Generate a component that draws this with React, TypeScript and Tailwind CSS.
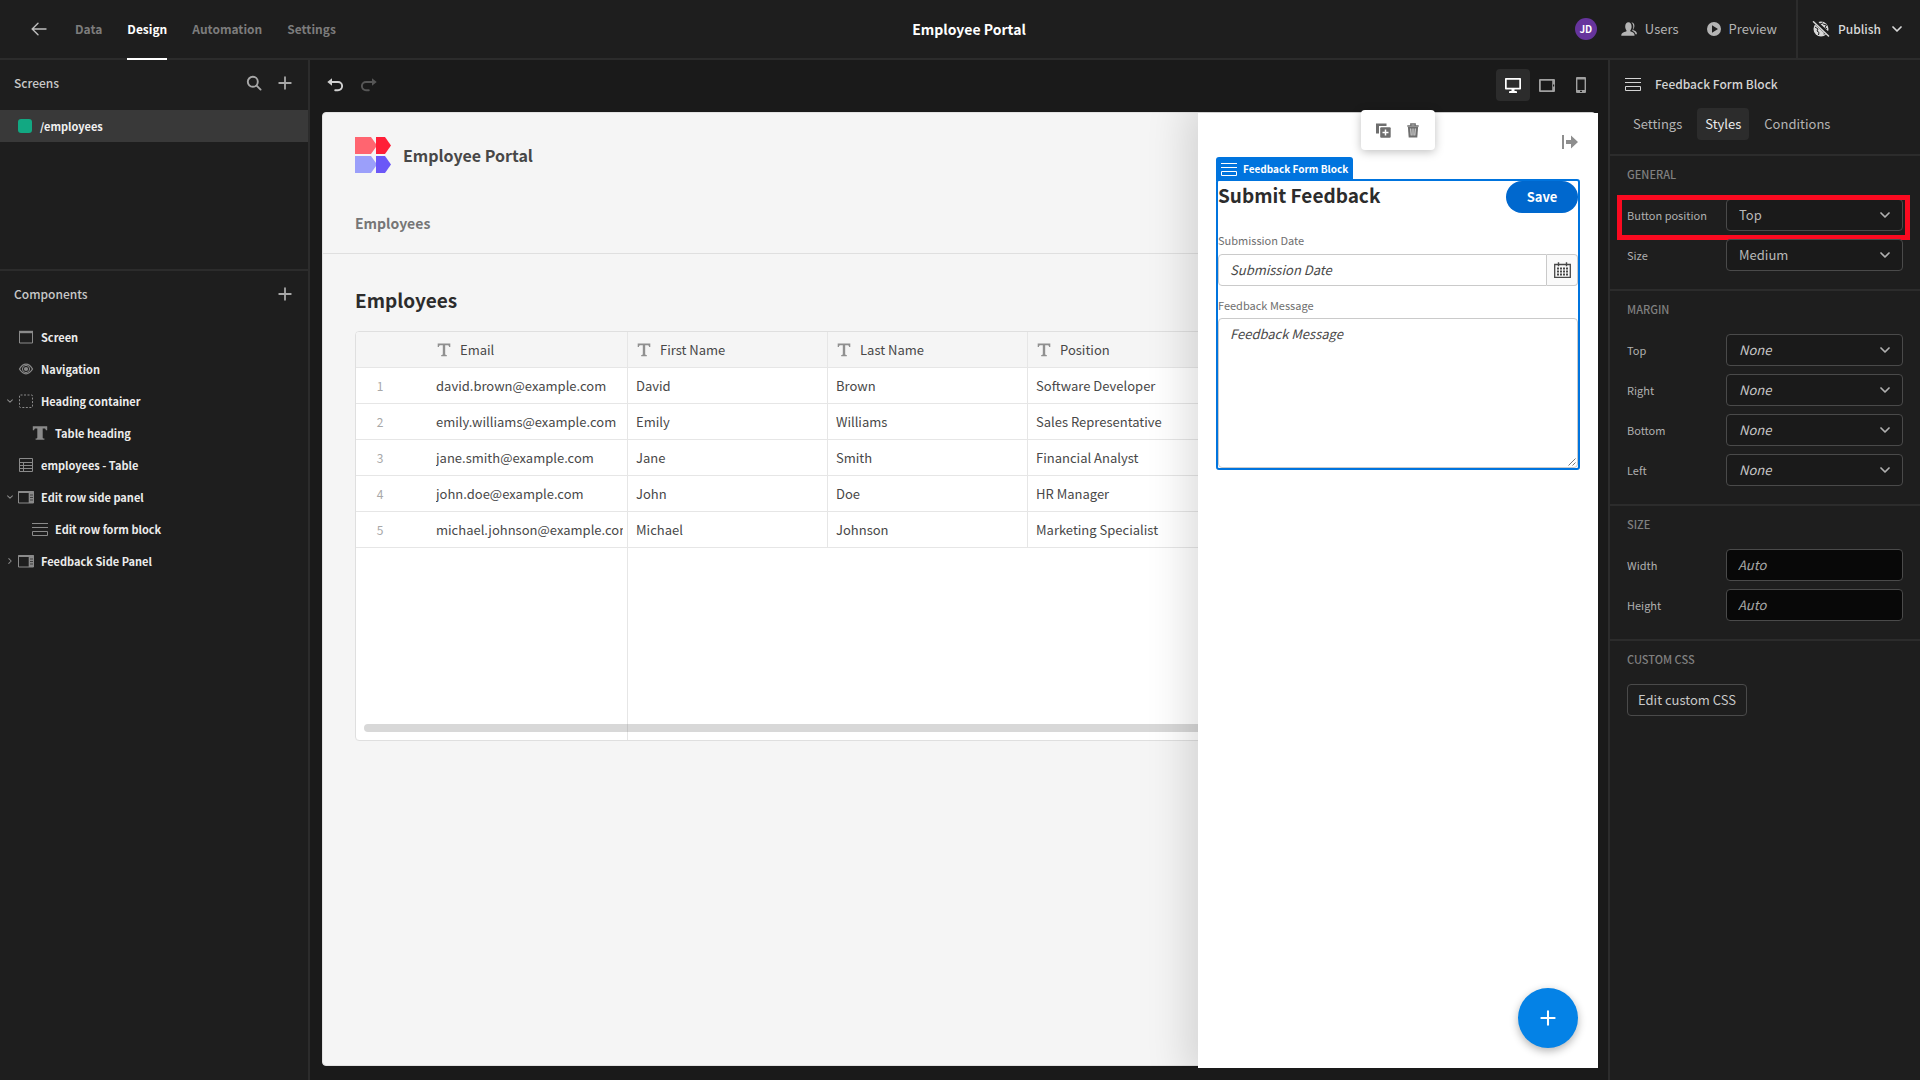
import type { ReactNode } from 'react';

interface IconProps {
  className?: string;
}

const FONT = "font-['Noto_Sans_CJK_SC','Liberation_Sans',sans-serif]";

function ArrowLeftIcon() {
  return (
    <svg viewBox="0 0 16 14" className="h-[14px] w-4" fill="none" stroke="currentColor" strokeWidth="1.4" strokeLinecap="round">
      <path d="M15 7H1.5M7 1.2 1.2 7 7 12.8" />
    </svg>
  );
}

function SearchIcon() {
  return (
    <svg viewBox="0 0 16 16" className="size-4" fill="none" stroke="currentColor" strokeWidth="1.9" strokeLinecap="round">
      <circle cx="6.8" cy="6.8" r="5" />
      <path d="m10.6 10.6 4 4" />
    </svg>
  );
}

function PlusIcon({ className }: IconProps) {
  return (
    <svg viewBox="0 0 14 14" className={className} fill="none" stroke="currentColor" strokeWidth="1.8" strokeLinecap="round">
      <path d="M7 1.2v11.6M1.2 7h11.6" />
    </svg>
  );
}

function ChevronDownIcon({ className }: IconProps) {
  return (
    <svg viewBox="0 0 10 6" className={className} fill="none" stroke="currentColor" strokeWidth="1.7" strokeLinecap="round" strokeLinejoin="round">
      <path d="m1 1 4 4 4-4" />
    </svg>
  );
}

function ChevronRightIcon({ className }: IconProps) {
  return (
    <svg viewBox="0 0 6 10" className={className} fill="none" stroke="currentColor" strokeWidth="1.7" strokeLinecap="round" strokeLinejoin="round">
      <path d="m1 1 4 4-4 4" />
    </svg>
  );
}

function UndoIcon({ className }: IconProps) {
  return (
    <svg viewBox="0 0 16 14" className={className}>
      <path d="M4 4h7a3.9 3.9 0 0 1 0 8.2H8.2" fill="none" stroke="currentColor" strokeWidth="1.9" strokeLinecap="round" />
      <path d="M5 .2v7.6L.3 4z" fill="currentColor" />
    </svg>
  );
}

function UsersIcon() {
  return (
    <svg viewBox="0 0 16 14" className="h-[14px] w-4" fill="currentColor">
      <path d="M9.7 9.4c-.5-.2-.5-.8-.3-1.2.8-.9 1.2-2.1 1.2-3.7C10.6 1.900 9.400.3 7.400.3S4.200 1.900 4.200 4.500c0 1.600.5 2.800 1.200 3.700.2.400.2 1-.3 1.200C2.600 10.100.3 11 .3 12.800v1h13.200v-1c0-1.800-1.600-2.700-3.800-3.400z" />
      <path d="M10.400.4c1.900-.2 3 1.200 3 3.400 0 1.500-.5 2.600-1.100 3.400-.3.400-.2.900.2 1.100 1.900.7 3.400 1.600 3.400 3.400v.6h-1.400c-.2-1.700-1.400-2.800-3.300-3.600.7-1 1.100-2.300 1.100-4.100 0-1.800-.6-3.300-1.900-4.200z" />
    </svg>
  );
}

function PlayIcon() {
  return (
    <svg viewBox="0 0 14 14" className="size-[14px]" fill="currentColor">
      <path fillRule="evenodd" d="M7 0a7 7 0 1 0 0 14A7 7 0 0 0 7 0zM5 3.300 11 7l-6 3.700z" />
    </svg>
  );
}

function GlobeStrikeIcon() {
  return (
    <svg viewBox="0 0 18 16" className="h-4 w-[18px]">
      <circle cx="9" cy="8" r="7.500" fill="currentColor" />
      <path d="M6.500 1.500 5 3.500l2 1.500 1-2 3-1.200M11 3l3.500 1-1.500 2.500 2 1.500M3 6l3 2-1 2 2 1.500-.5 2.500M10 9l3 1-1 3.500" fill="none" stroke="#1e1e1e" strokeWidth="1" />
      <path d="M2.500.2 17 13.800" stroke="#1e1e1e" strokeWidth="4" />
      <path d="M1.500.8 16.500 15" stroke="currentColor" strokeWidth="1.500" strokeLinecap="round" />
    </svg>
  );
}

function DesktopIcon() {
  return (
    <svg viewBox="0 0 16 15" className="h-[15px] w-4" fill="currentColor">
      <path fillRule="evenodd" d="M.8 0h14.400a.8.8 0 0 1 .8.8v9.900a.8.8 0 0 1-.8.8H9.500V13H11a1 1 0 0 1 1 1v1H4v-1a1 1 0 0 1 1-1h1.500v-1.500H.8a.8.8 0 0 1-.8-.8V.8A.8.8 0 0 1 .8 0zm.9 1.700v8.100h12.600V1.700z" />
    </svg>
  );
}

function TabletIcon() {
  return (
    <svg viewBox="0 0 16 13" className="h-[13px] w-4" fill="currentColor">
      <path fillRule="evenodd" d="M1 0h14a1 1 0 0 1 1 1v11a1 1 0 0 1-1 1H1a1 1 0 0 1-1-1V1a1 1 0 0 1 1-1zm.8 1.800v9.400h11.400V1.800zm12.200 3.700v2h1.200v-2z" />
    </svg>
  );
}

function PhoneIcon() {
  return (
    <svg viewBox="0 0 10 16" className="h-4 w-[10px]" fill="currentColor">
      <path fillRule="evenodd" d="M1 0h8a1 1 0 0 1 1 1v14a1 1 0 0 1-1 1H1a1 1 0 0 1-1-1V1a1 1 0 0 1 1-1zm.4 2.500v10.500h7.200V2.500zm2.600 11.300v1.200h2v-1.200z" />
    </svg>
  );
}

function ScreenIcon() {
  return (
    <svg viewBox="0 0 16 14" className="h-[14px] w-4">
      <path d="M1.500 2.500h13v10.500h-13z" fill="none" stroke="currentColor" />
      <path d="M1 .8h14v2.400H1z" fill="currentColor" />
    </svg>
  );
}

function EyeIcon() {
  return (
    <svg viewBox="0 0 16 12" className="h-3 w-4">
      <path d="M1.500 6C3.500 2.500 5.600 1.200 8 1.200S12.500 2.500 14.500 6c-2 3.500-4.100 4.800-6.500 4.800S3.500 9.500 1.500 6z" fill="none" stroke="currentColor" strokeWidth="1.300" />
      <circle cx="8" cy="6" r="3.600" fill="none" stroke="currentColor" />
      <circle cx="8" cy="6" r="2.100" fill="currentColor" />
    </svg>
  );
}

function ContainerIcon() {
  return (
    <svg viewBox="0 0 16 16" className="size-4" fill="none" stroke="currentColor">
      <rect x="1.500" y="2" width="13" height="12.500" rx="1" strokeDasharray="2 1.500" />
    </svg>
  );
}

function BoldTextIcon() {
  return (
    <svg viewBox="0 0 16 14" className="h-[14px] w-4" fill="currentColor">
      <path d="M.8.3h14.400V4.300h-1.300c-.2-1.300-.8-1.700-1.800-1.700H10.700v8.900c0 .7.400 1 1.700 1v1.200H3.600v-1.200c1.300 0 1.700-.3 1.700-1V2.600H3.900c-1 0-1.600.4-1.800 1.700H.8z" />
    </svg>
  );
}

function TextIcon() {
  return (
    <svg viewBox="0 0 14 14" className="size-[14px] shrink-0" fill="currentColor">
      <path d="M.7.5h12.600v3.500h-1.200c-.1-1.200-.6-1.700-1.600-1.700H8.200v8.700c0 .8.400 1.100 1.600 1.100v1.200H4.200v-1.200c1.200 0 1.600-.3 1.600-1.100V2.300H3.500c-1 0-1.500.5-1.600 1.700H.7z" />
    </svg>
  );
}

function TableIcon() {
  return (
    <svg viewBox="0 0 16 16" className="size-4" fill="none" stroke="currentColor">
      <path d="M1.500 1.500h13v13h-13zM1.500 5.500h13M1.500 8.500h13M1.500 11.500h13M5.500 5.500v9" />
    </svg>
  );
}

function SidePanelIcon() {
  return (
    <svg viewBox="0 0 16 14" className="h-[14px] w-4">
      <path d="M.5 1.500h15V13H.5z" fill="none" stroke="currentColor" />
      <path d="M.5 1h15v2H.5zM10.700 2.500h4.800V13h-4.800z" fill="currentColor" />
      <path d="M12 5h3M12 7.500h3M12 10h3" stroke="#1e1e1e" strokeWidth=".7" />
    </svg>
  );
}

function FormBlockIcon({ className }: IconProps) {
  return (
    <svg viewBox="0 0 16 14" className={className} fill="none" stroke="currentColor">
      <path d="M0 1.500h16M0 5.500h16M.5 9.500h15v4H.5z" />
    </svg>
  );
}

function DuplicateIcon() {
  return (
    <svg viewBox="0 0 15 15" className="size-[15px]">
      <path d="M0 .5h10.500V3H3v7.500H0z" fill="currentColor" />
      <rect x="4.200" y="4.200" width="10.500" height="10.500" rx="1" fill="currentColor" />
      <path d="M9.500 6.500v6M6.500 9.500h6" stroke="#ffffff" strokeWidth="1.500" />
    </svg>
  );
}

function TrashIcon() {
  return (
    <svg viewBox="0 0 12 15" className="h-[15px] w-3">
      <path d="M.3 3h11.400M3.800 2.500V1h4.400v1.500" fill="none" stroke="currentColor" strokeWidth="1.300" />
      <path d="M.9 4h10.200l-.8 10.400H1.700z" fill="currentColor" />
      <path d="m3.700 5.500.5 7M6 5.500v7M8.300 5.500l-.5 7" stroke="#ffffff" strokeWidth=".8" />
    </svg>
  );
}

function CloseDrawerIcon() {
  return (
    <svg viewBox="0 0 16 14" className="h-[14px] w-4" fill="currentColor">
      <path d="M0 0h2v14H0zM4 5h5V.5L16 7l-7 6.500V9H4z" />
    </svg>
  );
}

function CalendarIcon() {
  return (
    <svg viewBox="0 0 17 16" className="h-4 w-[17px]">
      <path d="M.7 2.500h15.600v12.800H.7z" fill="none" stroke="currentColor" strokeWidth="1.300" />
      <path d="M4.500.2v4M12.500.2v4" stroke="currentColor" strokeWidth="1.400" />
      <path d="M3 6.500h11M3 9.500h11M3 12.500h11" stroke="currentColor" strokeWidth="1.900" strokeDasharray="2 1" />
    </svg>
  );
}

function ResizeGrip() {
  return (
    <svg viewBox="0 0 8 8" className="pointer-events-none absolute right-[2px] bottom-[2px] size-2" stroke="#555555" strokeWidth=".8">
      <path d="M.5 7.500l7-7M4.500 7.500l3-3" />
    </svg>
  );
}

function BrandLogo() {
  return (
    <svg viewBox="0 0 36 36" className="size-9">
      <path d="M0 0h16l5 7v3l-5 7H0z" fill="#ff6570" />
      <path d="M21 0H30l6 8.500-6 8.500h-9z" fill="#ff1f38" />
      <path d="M0 19h16l5 7v3l-5 7H0z" fill="#9b9ffa" />
      <path d="M21 19H30l6 8.500-6 8.500h-9z" fill="#6b57f7" />
    </svg>
  );
}

const topTabs = ['Data', 'Design', 'Automation', 'Settings'];

function TopBar() {
  return (
    <header className="grid h-[60px] shrink-0 grid-cols-[1fr_auto_1fr] items-stretch border-b-2 border-[#2c2c2c] bg-[#1e1e1e]">
      <div className="flex items-center pl-[31px]">
        <button aria-label="Back" className="text-[#bebebe]">
          <ArrowLeftIcon />
        </button>
        <nav className="-mb-[2px] ml-7 flex gap-[25px] self-stretch text-[12px] font-bold">
          {topTabs.map((tab) => (
            <a
              key={tab}
              href="#"
              className={
                tab === 'Design'
                  ? 'flex items-center border-b-2 border-white text-white'
                  : 'flex items-center border-b-2 border-transparent text-[#7c7c7c]'
              }
            >
              {tab}
            </a>
          ))}
        </nav>
      </div>
      <h1 className="flex items-center pl-[18px] text-[14px] font-bold text-white">Employee Portal</h1>
      <div className="flex items-center justify-end text-[13px] text-[#b4b4b4]">
        <span className="mr-6 flex size-[22px] items-center justify-center rounded-full bg-[#66349c] text-[10px] font-bold text-white">
          JD
        </span>
        <button className="mr-7 flex items-center gap-2">
          <UsersIcon />
          Users
        </button>
        <button className="mr-[19px] flex items-center gap-2">
          <PlayIcon />
          Preview
        </button>
        <button className="flex items-center gap-2 self-stretch border-l-2 border-[#2c2c2c] pr-[18px] pl-[14px] text-[12px] font-medium text-[#d8d8d8]">
          <GlobeStrikeIcon />
          Publish
          <ChevronDownIcon className="ml-[3px] h-[6px] w-[10px]" />
        </button>
      </div>
    </header>
  );
}

interface TreeItem {
  label: string;
  icon: ReactNode;
  nested?: boolean;
  state?: 'open' | 'closed';
}

const treeItems: TreeItem[] = [
  { label: 'Screen', icon: <ScreenIcon /> },
  { label: 'Navigation', icon: <EyeIcon /> },
  { label: 'Heading container', icon: <ContainerIcon />, state: 'open' },
  { label: 'Table heading', icon: <BoldTextIcon />, nested: true },
  { label: 'employees - Table', icon: <TableIcon /> },
  { label: 'Edit row side panel', icon: <SidePanelIcon />, state: 'open' },
  { label: 'Edit row form block', icon: <FormBlockIcon className="h-[14px] w-4" />, nested: true },
  { label: 'Feedback Side Panel', icon: <SidePanelIcon />, state: 'closed' },
];

function LeftPanel() {
  return (
    <aside className="flex w-[310px] shrink-0 flex-col border-r-2 border-[#2c2c2c] bg-[#1e1e1e]">
      <section className="h-[211px] shrink-0 border-b-2 border-[#2c2c2c]">
        <div className="mb-1 flex h-[46px] items-center gap-4 pr-4 pl-[14px] text-[#c8c8c8]">
          <h2 className="flex-1 text-[12px] font-medium">Screens</h2>
          <button aria-label="Search screens" className="text-[#a8a8a8]">
            <SearchIcon />
          </button>
          <button aria-label="Add screen" className="text-[#a8a8a8]">
            <PlusIcon className="size-[14px]" />
          </button>
        </div>
        <a href="#" className="flex h-8 items-center gap-2 bg-[#393939] pl-[18px] text-[11px] font-bold text-[#f0f0f0]">
          <span className="size-[14px] rounded-[3px] bg-[#12a882]" />
          /employees
        </a>
      </section>
      <section>
        <div className="mb-1 flex h-[46px] items-center gap-4 pr-4 pl-[14px] text-[#c8c8c8]">
          <h2 className="flex-1 text-[12px] font-medium">Components</h2>
          <button aria-label="Add component" className="text-[#a8a8a8]">
            <PlusIcon className="size-[14px]" />
          </button>
        </div>
        <ul>
          {treeItems.map((item) => (
            <li key={item.label} className={item.nested ? 'flex h-8 items-center pl-[18px]' : 'flex h-8 items-center pl-1'}>
              <span className="flex w-[14px] justify-center pr-[2px] text-[#8a8a8a]">
                {item.state === 'open' && <ChevronDownIcon className="h-1 w-[6px]" />}
                {item.state === 'closed' && <ChevronRightIcon className="h-[6px] w-1" />}
              </span>
              <button className="flex items-center gap-[7px] text-[11px] font-bold text-[#ececec]">
                <span className="text-[#8a8a8a]">{item.icon}</span>
                {item.label}
              </button>
            </li>
          ))}
        </ul>
      </section>
    </aside>
  );
}

const columns = ['Email', 'First Name', 'Last Name', 'Position'];

const rows = [
  ['david.brown@example.com', 'David', 'Brown', 'Software Developer'],
  ['emily.williams@example.com', 'Emily', 'Williams', 'Sales Representative'],
  ['jane.smith@example.com', 'Jane', 'Smith', 'Financial Analyst'],
  ['john.doe@example.com', 'John', 'Doe', 'HR Manager'],
  ['michael.johnson@example.com', 'Michael', 'Johnson', 'Marketing Specialist'],
];

function EmployeesTable() {
  return (
    <div className="relative h-[410px] overflow-hidden rounded-[4px] border border-[#dfdfdf] bg-white">
      <table className="w-full table-fixed border-separate border-spacing-0 text-left text-[13px] text-[#484848]">
        <colgroup>
          <col className="w-[72px]" />
          <col className="w-[200px]" />
          <col className="w-[200px]" />
          <col className="w-[200px]" />
          <col />
        </colgroup>
        <thead>
          <tr className="h-9 bg-[#f5f5f5]">
            <th aria-label="Row" className="border-b border-[#e6e6e6] p-0" />
            {columns.map((column) => (
              <th key={column} className="border-r border-b border-[#e6e6e6] p-0 pl-[9px] font-normal">
                <span className="flex items-center gap-[9px]">
                  <span className="text-[#909090]">
                    <TextIcon />
                  </span>
                  {column}
                </span>
              </th>
            ))}
          </tr>
        </thead>
        <tbody>
          {rows.map((row, index) => (
            <tr key={row[0]} className="h-9">
              <td className="border-b border-[#e6e6e6] p-0 pr-6 text-center text-[12px] text-[#a8a8a8]">{index + 1}</td>
              {row.map((cell) => (
                <td key={cell} className="border-r border-b border-[#e6e6e6] p-0 pr-1 pl-2">
                  <div className="overflow-hidden whitespace-nowrap">{cell}</div>
                </td>
              ))}
            </tr>
          ))}
        </tbody>
      </table>
      {/* sticky column edge */}
      <div className="absolute inset-y-0 left-[271px] w-px bg-[#e6e6e6]" />
      <div className="absolute right-2 bottom-2 left-2 h-2 rounded-full bg-[#7f7f7f]/30" />
    </div>
  );
}

function FeedbackPanel() {
  return (
    <div className="absolute top-px right-0 bottom-0 flex w-[400px] flex-col bg-white shadow-[0_0_40px_10px_rgba(0,0,0,0.14)]">
      <div className="flex h-[54px] shrink-0 items-center justify-end pt-1 pr-5 text-[#8e8e8e]">
        <button aria-label="Close panel">
          <CloseDrawerIcon />
        </button>
      </div>
      <form className="relative mx-[18px] mt-3 rounded-[3px] border-2 border-[#0074de]">
        <div className="absolute -top-6 -left-[2px] flex h-6 items-center gap-[6px] rounded-t-[3px] bg-[#0074de] px-[5px] text-[10px] font-bold whitespace-nowrap text-white">
          <FormBlockIcon className="h-[14px] w-4" />
          Feedback Form Block
        </div>
        <div className="flex items-start justify-between">
          <h3 className="text-[19px] leading-7 font-bold text-[#2c2c2c]">Submit Feedback</h3>
          <button type="button" className="h-8 w-[72px] rounded-full bg-[#0068ce] text-[13px] font-bold text-white">
            Save
          </button>
        </div>
        <label htmlFor="submission-date" className="mt-[15px] mb-[2px] block text-[11px] leading-6 text-[#6e6e6e]">
          Submission Date
        </label>
        <div className="flex h-8">
          <input
            id="submission-date"
            placeholder="Submission Date"
            className="min-w-0 flex-1 rounded-l-[4px] border border-[#cacaca] px-[11px] text-[13px] italic placeholder:text-[#484848]"
          />
          <button
            type="button"
            aria-label="Pick a date"
            className="flex w-[31px] items-center justify-center rounded-r-[4px] border border-l-0 border-[#cacaca] bg-[#fafafa] text-[#484848]"
          >
            <CalendarIcon />
          </button>
        </div>
        <label htmlFor="feedback-message" className="mt-[7px] mb-px block text-[11px] leading-6 text-[#6e6e6e]">
          Feedback Message
        </label>
        <div className="relative">
          <textarea
            id="feedback-message"
            placeholder="Feedback Message"
            className="block h-[150px] w-full resize-none rounded-[4px] border border-[#cacaca] px-[11px] py-[3px] text-[13px] leading-6 italic placeholder:text-[#484848]"
          />
          <ResizeGrip />
        </div>
      </form>
      <button
        aria-label="Add"
        className="mt-auto mr-5 mb-5 flex size-[60px] items-center justify-center self-end rounded-full bg-[#0482e6] text-white shadow-[0_3px_8px_rgba(0,0,0,0.3)]"
      >
        <PlusIcon className="size-4" />
      </button>
    </div>
  );
}

function Canvas() {
  return (
    <main className="flex min-w-0 flex-1 flex-col bg-[#1a1a1a] pr-[10px] pb-3 pl-3">
      <div className="mb-[2px] flex h-[50px] shrink-0 items-center">
        <button aria-label="Undo" className="mr-[18px] ml-[5px] text-[#d0d0d0]">
          <UndoIcon className="h-[14px] w-4" />
        </button>
        <button aria-label="Redo" className="text-[#565656]">
          <UndoIcon className="h-[14px] w-4 -scale-x-100" />
        </button>
        <div className="ml-auto flex items-center">
          <button aria-label="Desktop" className="flex h-8 w-[34px] items-center justify-center rounded-[4px] bg-[#2c2c2c] text-white">
            <DesktopIcon />
          </button>
          <button aria-label="Tablet" className="flex h-8 w-[34px] items-center justify-center text-[#a0a0a0]">
            <TabletIcon />
          </button>
          <button aria-label="Mobile" className="flex h-8 w-[34px] items-center justify-center text-[#a0a0a0]">
            <PhoneIcon />
          </button>
        </div>
      </div>
      <div className="relative min-h-0 flex-1">
        <div className="relative flex h-full flex-col overflow-hidden pb-[2px]">
          <div className="mr-[2px] flex-1 rounded-[4px] border border-[#e2e2e2] bg-[#f5f5f5]">
            <div className="flex h-[141px] flex-col border-b border-[#dfdfdf] px-8 pt-6">
              <div className="flex items-center gap-3">
                <BrandLogo />
                <span className="text-[16px] font-bold text-[#484848]">Employee Portal</span>
              </div>
              <a href="#" className="mt-[38px] self-start text-[14px] leading-6 font-bold text-[#767676]">
                Employees
              </a>
            </div>
            <div className="px-8 pt-8">
              <h2 className="mb-[17px] text-[19px] leading-7 font-bold text-[#2c2c2c]">Employees</h2>
              <EmployeesTable />
            </div>
          </div>
          <FeedbackPanel />
        </div>
        <div className="absolute -top-[2px] right-[163px] flex h-10 w-[74px] items-center gap-4 rounded-[4px] bg-white pl-[15px] text-[#6e6e6e] shadow-[0_2px_10px_rgba(0,0,0,0.25)]">
          <button aria-label="Duplicate">
            <DuplicateIcon />
          </button>
          <button aria-label="Delete">
            <TrashIcon />
          </button>
        </div>
      </div>
    </main>
  );
}

interface SectionProps {
  title: string;
  children: ReactNode;
}

function Section({ title, children }: SectionProps) {
  return (
    <section className="border-t-2 border-[#2c2c2c] px-[17px] pb-[18px]">
      <h3 className="mb-[7px] flex h-9 items-center text-[11px] font-medium text-[#808080]">{title}</h3>
      <div className="flex flex-col gap-2">{children}</div>
    </section>
  );
}

interface FieldProps {
  id: string;
  label: string;
  value: string;
  highlighted?: boolean;
}

function SelectField({ id, label, value, highlighted }: FieldProps) {
  return (
    <div className="relative flex items-center">
      <label htmlFor={id} className="w-[99px] shrink-0 text-[11px] text-[#b0b0b0]">
        {label}
      </label>
      <div className="relative flex-1">
        <select
          id={id}
          className={
            value === 'None'
              ? 'block h-8 w-full appearance-none rounded-[4px] border border-[#4a4a4a] bg-[#1a1a1a] px-3 text-[13px] text-[#c8c8c8] italic'
              : 'block h-8 w-full appearance-none rounded-[4px] border border-[#4a4a4a] bg-[#1a1a1a] px-3 text-[13px] text-[#b8b8b8]'
          }
        >
          <option>{value}</option>
        </select>
        <ChevronDownIcon className="pointer-events-none absolute top-[13px] right-[13px] h-[6px] w-[10px] text-[#b0b0b0]" />
      </div>
      {highlighted && (
        <div className="pointer-events-none absolute -top-1 -right-[7px] -bottom-[9px] -left-[10px] border-5 border-[#fb0a20]" />
      )}
    </div>
  );
}

function TextField({ id, label, value }: FieldProps) {
  return (
    <div className="flex items-center">
      <label htmlFor={id} className="w-[99px] shrink-0 text-[11px] text-[#b0b0b0]">
        {label}
      </label>
      <input
        id={id}
        placeholder={value}
        className="h-8 min-w-0 flex-1 rounded-[4px] border border-[#4a4a4a] bg-[#080808] px-[11px] pb-[2px] text-[13px] italic placeholder:text-[#a8a8a8]"
      />
    </div>
  );
}

function RightPanel() {
  return (
    <aside className="w-[312px] shrink-0 border-l-2 border-[#2c2c2c] bg-[#1e1e1e]">
      <div className="flex h-12 items-center gap-[14px] pl-[15px] text-[#d4d4d4]">
        <FormBlockIcon className="h-[14px] w-4" />
        <h2 className="text-[12px] font-medium">Feedback Form Block</h2>
      </div>
      <div className="mb-[14px] flex gap-[7px] pl-[15px] text-[13px] text-[#b4b4b4]">
        <button className="h-8 px-2">Settings</button>
        <button className="h-8 rounded-[4px] bg-[#2c2c2c] px-2 text-[#ececec]">Styles</button>
        <button className="h-8 px-2">Conditions</button>
      </div>
      <Section title="GENERAL">
        <SelectField id="button-position" label="Button position" value="Top" highlighted />
        <SelectField id="size" label="Size" value="Medium" />
      </Section>
      <Section title="MARGIN">
        <SelectField id="margin-top" label="Top" value="None" />
        <SelectField id="margin-right" label="Right" value="None" />
        <SelectField id="margin-bottom" label="Bottom" value="None" />
        <SelectField id="margin-left" label="Left" value="None" />
      </Section>
      <Section title="SIZE">
        <TextField id="width" label="Width" value="Auto" />
        <TextField id="height" label="Height" value="Auto" />
      </Section>
      <Section title="CUSTOM CSS">
        <button className="h-8 self-start rounded-[4px] border border-[#4a4a4a] px-[10px] text-[13px] text-[#c8c8c8]">
          Edit custom CSS
        </button>
      </Section>
    </aside>
  );
}

export default function App() {
  return (
    <div className={`flex h-screen flex-col overflow-hidden leading-5 ${FONT}`}>
      <TopBar />
      <div className="flex min-h-0 flex-1">
        <LeftPanel />
        <Canvas />
        <RightPanel />
      </div>
    </div>
  );
}
